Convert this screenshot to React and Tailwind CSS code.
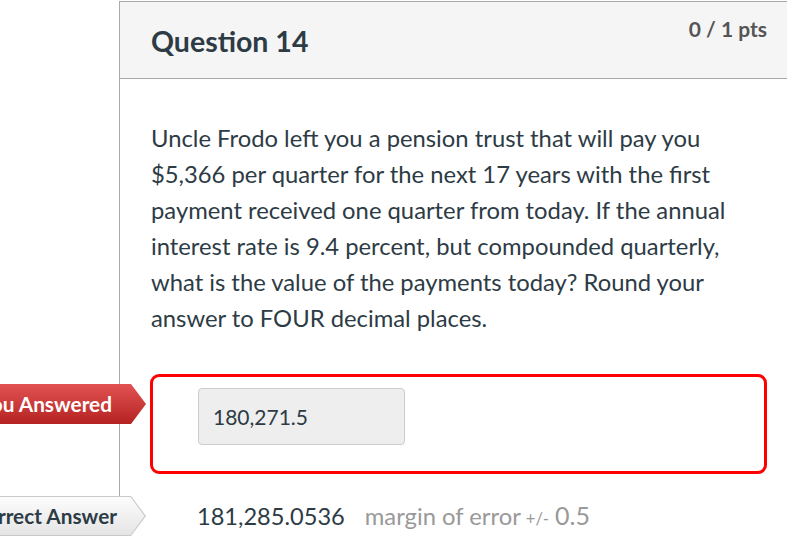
export default function App() {
  return (
    <div className="min-h-[551px] w-[787px] overflow-hidden bg-white font-['Lato',sans-serif] text-[#2d3b45]">
      <div className="ml-[119px] mt-px w-[700px] border-l border-t border-[#aaa]">
        {/* header */}
        <div className="flex h-[77px] items-start justify-between border-b border-[#aaa] bg-[#f5f5f5] pl-[31px] pr-[52px]">
          <h2 className="mt-[21px] text-[28.5px] font-bold leading-[36px]">Question 14</h2>
          <div className="mt-[11px] text-[21px] font-bold text-[#555]">0 / 1 pts</div>
        </div>

        {/* body */}
        <div className="pl-[31px] pr-[60px] pt-[41px]">
          <p className="w-[588px] text-[23.8px] leading-[36px]">
            Uncle Frodo left you a pension trust that will pay you $5,366 per quarter for the next 17 years with
            the first payment received one quarter from today. If the annual interest rate is 9.4 percent, but
            compounded quarterly, what is the value of the payments today? Round your answer to FOUR decimal
            places.
          </p>
        </div>

        {/* answers */}
        <div className="mt-[38px] -ml-[120px]">
          <div className="flex items-start">
            <div className="mt-[10px] h-[40px] w-[146px] shrink-0 bg-gradient-to-b from-[#e25252] to-[#b42121] [clip-path:polygon(0_0,131px_0,146px_50%,131px_100%,0_100%)]">
              <div className="flex h-full items-center justify-end pr-[34px] text-[20.8px] font-bold text-white whitespace-nowrap">
                You Answered
              </div>
            </div>
            <div className="ml-[4px] h-[100px] w-[617px] rounded-[9px] border-[3px] border-[#f00] pl-[45px] pt-[11px]">
              <div className="flex h-[57px] w-[207px] items-center rounded-[4px] border border-[#ccc] bg-[#eee] pl-[14px] text-[21px]">
                180,271.5
              </div>
            </div>
          </div>

          <div className="mt-[22px] flex items-center">
            <div className="h-[40px] w-[146px] shrink-0 bg-[#c9c9c9] [clip-path:polygon(0_0,131px_0,146px_50%,131px_100%,0_100%)]">
              <div className="h-full w-full [clip-path:polygon(0_1px,130.5px_1px,144.5px_50%,130.5px_calc(100%-1px),0_calc(100%-1px))] bg-gradient-to-b from-[#fdfdfd] to-[#e4e4e4]">
                <div className="flex h-full items-center justify-end pr-[29px] text-[20.8px] font-bold text-[#2d3b45] whitespace-nowrap">
                  Correct Answer
                </div>
              </div>
            </div>
            <div className="ml-[51px] flex items-baseline whitespace-nowrap">
              <span className="text-[23.6px]">181,285.0536</span>
              <span className="ml-[20px] text-[23.8px] text-[#999]">margin of error</span>
              <span className="ml-[5px] text-[16.5px] text-[#999]">+/-</span>
              <span className="ml-[6px] text-[25px] text-[#999]">0.5</span>
            </div>
          </div>
        </div>
      </div>
    </div>
  );
}
